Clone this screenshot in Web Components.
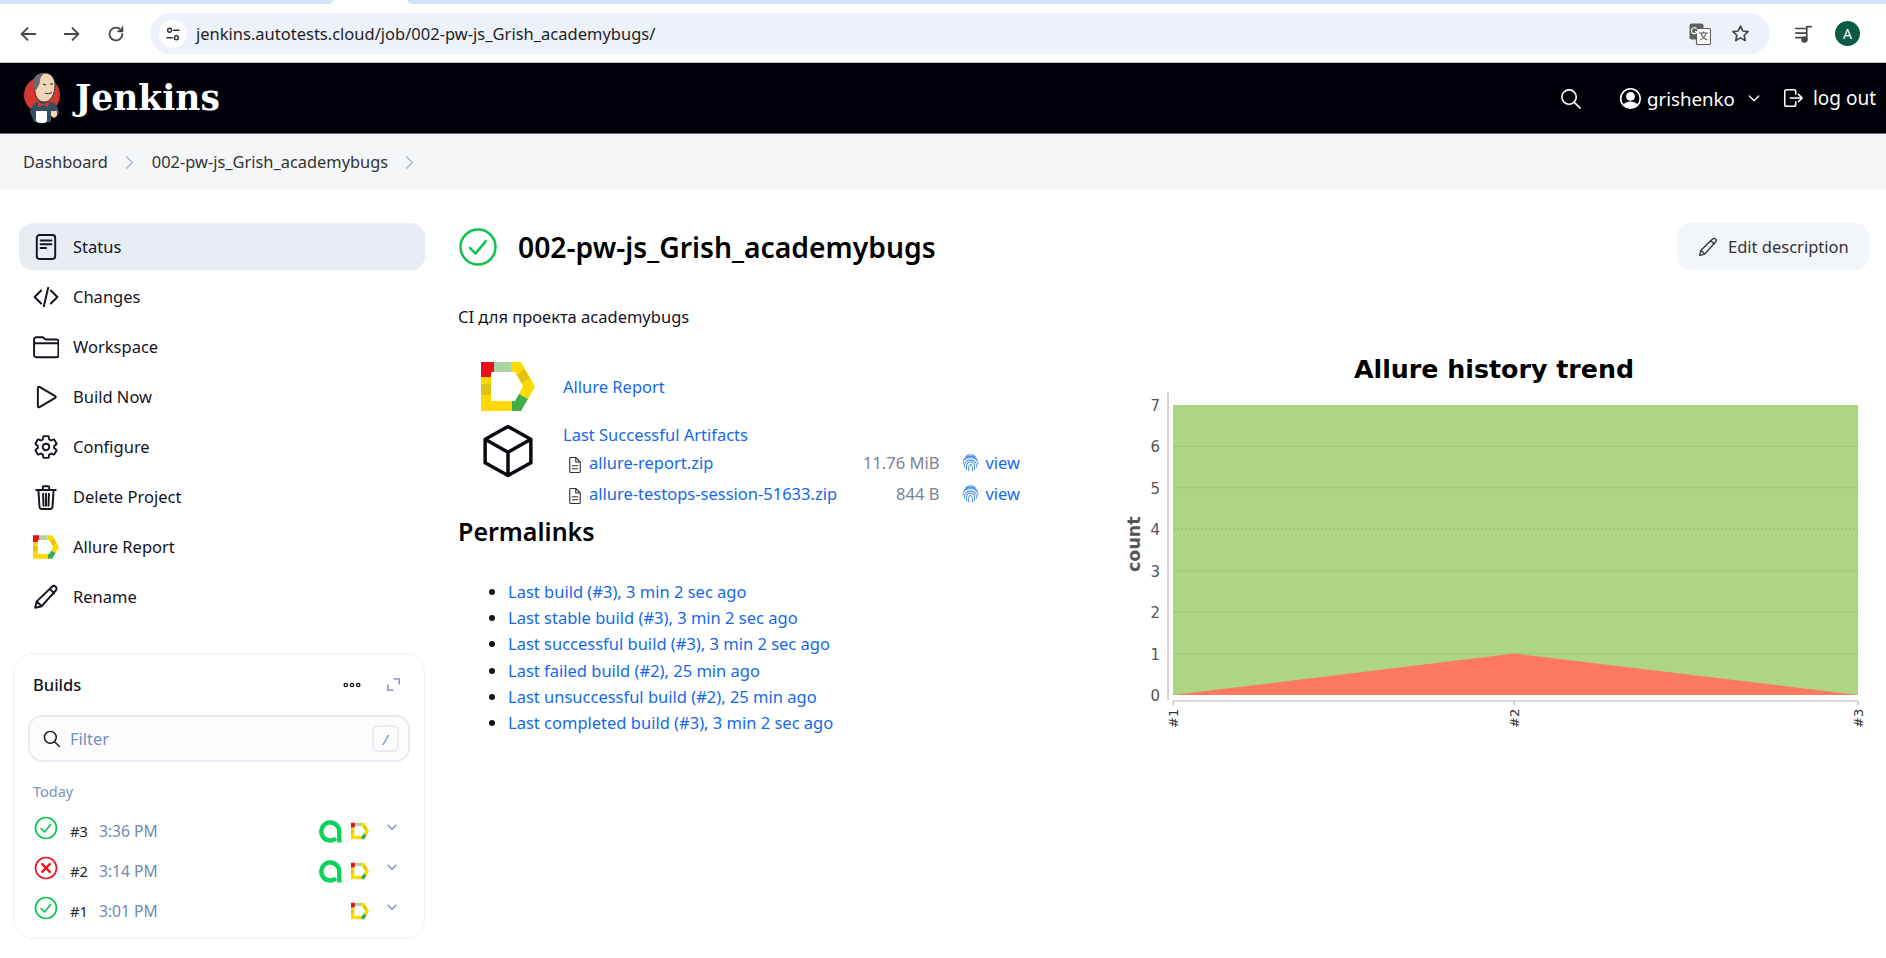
<!DOCTYPE html>
<html lang="en">
<head>
<meta charset="utf-8">
<title>002-pw-js_Grish_academybugs - Jenkins</title>
<style>
  html, body { margin: 0; background: #fff; }
  body { font-family: "Noto Sans", "Open Sans", sans-serif; font-size: 16.5px; color: #14141f; overflow: hidden; height: 958px; }
  .page { display: flex; align-items: flex-start; }
</style>
</head>
<body>
<browser-bar url="jenkins.autotests.cloud/job/002-pw-js_Grish_academybugs/"></browser-bar>
<jenkins-header user="grishenko"></jenkins-header>
<bread-crumbs>
  <bread-crumb>Dashboard</bread-crumb>
  <bread-crumb>002-pw-js_Grish_academybugs</bread-crumb>
</bread-crumbs>
<div class="page">
  <side-bar>
    <nav-item icon="status" active>Status</nav-item>
    <nav-item icon="code">Changes</nav-item>
    <nav-item icon="folder">Workspace</nav-item>
    <nav-item icon="play">Build Now</nav-item>
    <nav-item icon="gear">Configure</nav-item>
    <nav-item icon="trash">Delete Project</nav-item>
    <nav-item icon="allure">Allure Report</nav-item>
    <nav-item icon="pencil">Rename</nav-item>
    <builds-card slot="card">
      <build-row num="#3" time="3:36 PM" status="ok" testops></build-row>
      <build-row num="#2" time="3:14 PM" status="fail" testops></build-row>
      <build-row num="#1" time="3:01 PM" status="ok"></build-row>
    </builds-card>
  </side-bar>
  <job-page name="002-pw-js_Grish_academybugs" description="CI для проекта academybugs">
    <job-links>
      <artifact-row name="allure-report.zip" size="11.76 MiB"></artifact-row>
      <artifact-row name="allure-testops-session-51633.zip" size="844 B"></artifact-row>
    </job-links>
    <perma-links>
      <li>Last build (#3), 3 min 2 sec ago</li>
      <li>Last stable build (#3), 3 min 2 sec ago</li>
      <li>Last successful build (#3), 3 min 2 sec ago</li>
      <li>Last failed build (#2), 25 min ago</li>
      <li>Last unsuccessful build (#2), 25 min ago</li>
      <li>Last completed build (#3), 3 min 2 sec ago</li>
    </perma-links>
    <trend-chart slot="chart"></trend-chart>
  </job-page>
</div>

<script>
const ALLURE_LOGO = `
  <polygon fill="#e8101a" points="0,0 13,0 13,10 10,10 10,15 0,15"/>
  <polygon fill="#a9d3a4" points="13,0 30,0 30,10 13,10"/>
  <polygon fill="#ffd900" points="30,0 40,0 54,24.5 47,37 38,32 42,24.5 34,10 30,10"/>
  <polygon fill="#e3c312" points="36,13 43,7 49,16 41,21"/>
  <polygon fill="#ffd900" points="0,15 10,15 10,22 0,22"/>
  <polygon fill="#e3c312" points="0,22 10,22 10,33 0,33"/>
  <polygon fill="#ffd900" points="0,33 10,33 10,39 31,39 31,49 0,49"/>
  <polygon fill="#3fae49" points="31,39 34,39 38,32 47,37 40,49 31,49"/>`;

// stroke icons, all on a 24 box
const ICONS = {
  back: `<path d="M20 12H5M11.5 5.5 5 12l6.5 6.5"/>`,
  forward: `<path d="M4 12h15M12.5 5.5 19 12l-6.5 6.5"/>`,
  reload: `<path d="M19 12a7 7 0 1 1-2.2-5.1L19 9M19 4.5V9h-4.5"/>`,
  tune: `<circle cx="7.5" cy="7" r="2.6"/><path d="M13 7h7M4 17h7"/><circle cx="16.5" cy="17" r="2.6"/>`,
  star: `<path d="M12 3.5l2.6 5.6 6.1.7-4.5 4.2 1.2 6L12 17l-5.4 3 1.2-6-4.5-4.2 6.1-.7z"/>`,
  search: `<circle cx="10.5" cy="10.5" r="7.5"/><path d="M16 16l6 6"/>`,
  user: `<circle cx="12" cy="12" r="10.2"/><circle cx="12" cy="9.8" r="3.8" fill="currentColor"/><path fill="currentColor" stroke="none" d="M4.8 18.6c1.6-2.6 4.2-3.6 7.2-3.6s5.6 1 7.2 3.6A10 10 0 0 1 12 22a10 10 0 0 1-7.2-3.4z"/>`,
  chevron: `<path d="M5 9l7 7 7-7"/>`,
  crumb: `<path d="M8 4l8 8-8 8"/>`,
  logout: `<path d="M15 8V5a2 2 0 0 0-2-2H5a2 2 0 0 0-2 2v14a2 2 0 0 0 2 2h8a2 2 0 0 0 2-2v-3M9 12h13M18 8l4 4-4 4"/>`,
  status: `<rect x="3.5" y="1" width="17" height="22" rx="2.4"/><path d="M7 6h10M7 9.500h10M7 13h5"/>`,
  code: `<path d="M7.500 6 1.500 12l6 6M16.500 6l6 6-6 6M14 3.500 10 20.500"/>`,
  folder: `<path d="M1 18.500V5a2 2 0 0 1 2-2h5.500c1.600 0 1.900 2 3.500 2h9.500a2 2 0 0 1 2 2v12.500a2 2 0 0 1-2 2H3a2 2 0 0 1-2-2zM1 8.500h22"/>`,
  play: `<path d="M4.500 3.500v17c0 .8.800 1.200 1.500.8l14.500-8.500c.6-.4.6-1.200 0-1.600L6 2.700c-.7-.4-1.500 0-1.500.8z"/>`,
  gear: `<g transform="scale(.0469)" stroke-width="38"><path d="M262.290 192.310a64 64 0 1057.400 57.400 64.130 64.130 0 00-57.400-57.400zM416.390 256a154.340 154.340 0 01-1.530 20.790l45.210 35.460a10.810 10.810 0 012.450 13.750l-42.770 74a10.810 10.810 0 01-13.140 4.590l-44.900-18.080a16.110 16.110 0 00-15.170 1.750A164.480 164.480 0 01325 400.800a15.940 15.940 0 00-8.820 12.140l-6.730 47.890a11.080 11.080 0 01-10.680 9.170h-85.540a11.110 11.110 0 01-10.690-8.870l-6.720-47.820a16.070 16.070 0 00-9-12.220 155.300 155.300 0 01-21.460-12.570 16 16 0 00-15.110-1.710l-44.890 18.070a10.810 10.810 0 01-13.140-4.580l-42.770-74a10.800 10.800 0 012.450-13.750l38.210-30a16.050 16.050 0 006-14.080c-.36-4.170-.58-8.330-.58-12.500s.21-8.270.58-12.350a16 16 0 00-6.070-13.940l-38.190-30A10.810 10.810 0 0149.48 186l42.770-74a10.810 10.810 0 0113.140-4.590l44.900 18.080a16.110 16.110 0 0015.17-1.750A164.480 164.480 0 01187 111.200a15.940 15.940 0 008.820-12.140l6.730-47.890A11.080 11.080 0 01213.23 42h85.540a11.110 11.110 0 0110.69 8.870l6.720 47.820a16.070 16.070 0 009 12.220 155.300 155.300 0 0121.460 12.570 16 16 0 0015.11 1.710l44.890-18.070a10.810 10.810 0 0113.140 4.580l42.770 74a10.800 10.800 0 01-2.450 13.750l-38.210 30a16.050 16.050 0 00-6.050 14.080c.33 4.140.55 8.300.55 12.470z"/></g>`,
  trash: `<path d="M5 5.500l1 15.500c.1 1 .8 2 2 2h8c1.200 0 1.900-1 2-2l1-15.500M3 5.500h18M9 5.500V3c0-.6.400-1 1-1h4c.6 0 1 .4 1 1v2.500M9.300 9l.4 11M12 9v11M14.700 9l-.4 11"/>`,
  pencil: `<path d="M2 22l1.500-6L17.500 2.500c1-1 2.500-1 3.500 0s1 2.500 0 3.500L8 20.500zM3.500 16 8 20.500M15.500 4.500 19.500 8.500"/>`,
  dots: `<circle cx="4.500" cy="12" r="2"/><circle cx="12" cy="12" r="2"/><circle cx="19.500" cy="12" r="2"/>`,
  expand: `<path d="M13 3h8v8M11 21H3v-8"/>`,
  check: `<circle cx="12" cy="12" r="10.500"/><path d="M7.200 12.500l3.300 3.500 6.200-7.500"/>`,
  cross: `<circle cx="12" cy="12" r="10.500"/><path d="M8.200 8.200l7.600 7.600M15.800 8.200l-7.600 7.600" stroke-width="2.400"/>`,
  cube: `<path d="M12 1.500 2.200 7v10L12 22.500 21.800 17V7zM2.200 7 12 12.500 21.800 7M12 12.500v10"/>`,
  file: `<path d="M6 2h7l6 6v12.500c0 .8-.7 1.500-1.500 1.500h-11c-.8 0-1.500-.7-1.500-1.500v-17C5 2.700 5.200 2 6 2zM13 2v6h6M8.500 13h7M8.500 17h7"/>`,
  print: `<path d="M6 4.500A9.500 9.500 0 0 1 18 4.500M3.500 9a10 10 0 0 1 17 0M2.500 14c0-5 4-8 9.500-8s9.500 3 9.500 8M4.500 18c-.7-5 1.500-9 7.500-9s8 4 7.500 9M7 21c-.5-4-.5-9.500 5-9.500s5.500 5.500 5 9.500M9.800 22.500c-.6-3-.3-8 2.200-8s2.800 5 2.200 8"/>`,
  music: `<path d="M3 6h11M3 11h11M3 16h7M15 4.500v13"/><circle cx="12.500" cy="18" r="2.600" fill="currentColor"/><path d="M15 4h5"/>`
};

function iconSvg(name, size, sw) {
  if (name === 'allure') {
    return `<svg viewBox="0 0 54 49" width="${size}" height="${size}" style="display:block">${ALLURE_LOGO}</svg>`;
  }
  return `<svg viewBox="0 0 24 24" width="${size}" height="${size}" fill="none" stroke="currentColor" stroke-width="${sw}" stroke-linecap="round" stroke-linejoin="round" style="display:block">${ICONS[name]}</svg>`;
}

class AppIcon extends HTMLElement {
  connectedCallback() {
    const size = this.getAttribute('size') || 24;
    const sw = this.getAttribute('sw') || 2;
    const color = this.getAttribute('color') || 'inherit';
    this.attachShadow({ mode: 'open' });
    this.shadowRoot.innerHTML = `
      <style>:host { display: block; flex: none; width: ${size}px; height: ${size}px; color: ${color}; }</style>
      ${iconSvg(this.getAttribute('name'), size, sw)}`;
  }
}

class BrowserBar extends HTMLElement {
  connectedCallback() {
    this.attachShadow({ mode: 'open' });
    this.shadowRoot.innerHTML = `
      <style>
        :host { display: block; height: 63px; background: #fff; box-sizing: border-box; border-bottom: 1px solid #c9c9c9; }
        .strip { display: flex; height: 4px; }
        .strip i { background: #d3e3fd; display: block; }
        .strip .l { width: 333px; border-bottom-right-radius: 6px; }
        .strip .r { flex: 1; margin-left: 75px; border-bottom-left-radius: 6px; }
        .tools { display: flex; align-items: center; height: 41px; margin-top: 9px; color: #474747; }
        .nav { margin-left: 17px; margin-right: 22px; }
        .nav + .nav { margin-left: 0; }
        .pill { width: 1620px; height: 41px; background: #edf2fa; border-radius: 21px; display: flex; align-items: center; box-sizing: border-box; padding-left: 9px; }
        .site { width: 28px; height: 28px; border-radius: 50%; background: #fff; display: flex; align-items: center; justify-content: center; color: #333; }
        .url { margin-left: 9px; font-size: 16.5px; color: #1f1f1f; flex: 1; }
        .translate { width: 22px; height: 22px; margin-right: 19px; }
        .star { margin-right: 19px; }
        .music { margin-left: 23px; }
        .avatar { margin-left: 20px; width: 25px; height: 25px; border-radius: 50%; background: #0b5a47; color: #fff; font-size: 14px; display: flex; align-items: center; justify-content: center; }
      </style>
      <div class="strip"><i class="l"></i><i class="r"></i></div>
      <div class="tools">
        <app-icon class="nav" name="back" size="22" sw="2"></app-icon>
        <app-icon class="nav" name="forward" size="22" sw="2"></app-icon>
        <app-icon class="nav" name="reload" size="22" sw="2" style="margin-right:23px"></app-icon>
        <div class="pill">
          <span class="site"><app-icon name="tune" size="18" sw="2"></app-icon></span>
          <span class="url">${this.getAttribute('url')}</span>
          <svg class="translate" viewBox="0 0 22 22" width="22" height="22">
            <rect x="0.500" y="0.500" width="14" height="16" rx="2" fill="#5f5f5f"/>
            <rect x="7.500" y="5.500" width="14" height="16" rx="1.500" fill="#fff" stroke="#5f5f5f" stroke-width="1.200"/>
            <path d="M10 10h9M14.500 8.500V10M12 10c1 3.500 3.500 6 6.500 7M17 10c-.8 3.500-3 6-6 7" fill="none" stroke="#5f5f5f" stroke-width="1.100"/>
            <path d="M7.500 5.500a3 3 0 1 0 .8 3.200H6" fill="none" stroke="#fff" stroke-width="1.200"/>
          </svg>
          <app-icon class="star" name="star" size="21" sw="1.900"></app-icon>
        </div>
        <app-icon class="music" name="music" size="22" sw="1.800"></app-icon>
        <span class="avatar">A</span>
      </div>`;
  }
}

class JenkinsHeader extends HTMLElement {
  connectedCallback() {
    this.attachShadow({ mode: 'open' });
    this.shadowRoot.innerHTML = `
      <style>
        :host { display: block; height: 71px; box-sizing: border-box; background: #000009; border-bottom: 1px solid #6b6b70; color: #fff; }
        .row { display: flex; align-items: center; height: 70px; padding: 0 10px 0 24px; }
        .brand { font-family: "DejaVu Serif", "Liberation Serif", serif; font-weight: 700; font-size: 34.500px; margin-left: 15px; }
        .right { margin-left: auto; display: flex; align-items: center; font-size: 19px; }
        .name { margin-left: 5px; font-size: 18.700px; }
        .who { margin-left: 37px; }
        .chev { margin-left: 11px; }
        .out { margin-left: 20px; }
        .bye { margin-left: 9px; }
        svg { display: block; flex: none; }
      </style>
      <div class="row">
        <svg width="36" height="52" viewBox="0 0 36 52">
          <circle cx="18" cy="23" r="18" fill="#d33833"/>
          <path d="M6 40c1-7 6-11 11-11l11 1c4 2 7 6 7 12l-4 3-4-3v8H10z" fill="#335061"/>
          <path d="M11 10C11 4 16 1 21 1c6 0 10 5 10 12 0 9-4 17-11 17-5 0-9-5-9-11z" fill="#f0d6b7" stroke="#231f20" stroke-width=".8"/>
          <path d="M12 18C8 14 8 6 13 3c3-2 6-2 8-2-3 2-5 4-5 8 0 3-2 6-4 9z" fill="#6d6b6d"/>
          <path d="M21 21c2 1 5 1 7-1" fill="none" stroke="#231f20" stroke-width="1"/>
          <path d="M19 12l3 1M26 12l3 0" stroke="#231f20" stroke-width="1.200"/>
          <path d="M14 30l5 2 6-2-1 5-5-2-5 2z" fill="#d33833"/>
          <path d="M12 39h11v10c-1 3-9 3-11 0z" fill="#fff"/>
          <path d="M27 39h6v5l-3 2-3-2z" fill="#f0d6b7"/>
        </svg>
        <span class="brand">Jenkins</span>
        <div class="right">
          <app-icon name="search" size="23" sw="1.700"></app-icon>
          <app-icon class="who" name="user" size="23" sw="1.700"></app-icon>
          <span class="name">${this.getAttribute('user')}</span>
          <app-icon class="chev" name="chevron" size="16" sw="2"></app-icon>
          <app-icon class="out" name="logout" size="22" sw="1.700"></app-icon>
          <span class="bye">log out</span>
        </div>
      </div>`;
  }
}

class BreadCrumbs extends HTMLElement {
  connectedCallback() {
    this.attachShadow({ mode: 'open' });
    this.shadowRoot.innerHTML = `
      <style>
        :host { display: flex; align-items: center; height: 56px; box-sizing: border-box; padding: 0 0 2px 23px; background: #f5f6f8; color: #333; font-size: 16.400px; }
      </style>
      <slot></slot>`;
  }
}

class BreadCrumb extends HTMLElement {
  connectedCallback() {
    this.attachShadow({ mode: 'open' });
    this.shadowRoot.innerHTML = `
      <style>
        :host { display: flex; align-items: center; }
        app-icon { color: #a4b8d4; margin: 2px 14px 0 13px; }
      </style>
      <slot></slot>
      <app-icon name="crumb" size="17" sw="1.900"></app-icon>`;
  }
}

class SideBar extends HTMLElement {
  connectedCallback() {
    this.attachShadow({ mode: 'open' });
    this.shadowRoot.innerHTML = `
      <style>
        :host { display: block; flex: none; width: 425px; box-sizing: border-box; padding: 33px 0 0 0; }
        .nav { display: flex; flex-direction: column; gap: 3px; margin-left: 19px; }
        .card { display: block; margin: 33px 0 0 13px; }
      </style>
      <div class="nav"><slot></slot></div>
      <div class="card"><slot name="card"></slot></div>`;
  }
}

class NavItem extends HTMLElement {
  connectedCallback() {
    this.attachShadow({ mode: 'open' });
    const name = this.getAttribute('icon');
    this.shadowRoot.innerHTML = `
      <style>
        :host { display: flex; align-items: center; gap: 14px; height: 47px; padding-left: 14px; border-radius: 14px; color: #14141f; }
        :host([active]) { background: #e8ecf3; }
        .t { position: relative; top: -0.500px; }
      </style>
      <app-icon name="${name}" size="26" sw="${name === 'gear' ? 2 : 1.800}"></app-icon>
      <span class="t"><slot></slot></span>`;
  }
}

class BuildsCard extends HTMLElement {
  connectedCallback() {
    this.attachShadow({ mode: 'open' });
    this.shadowRoot.innerHTML = `
      <style>
        :host { display: block; box-sizing: border-box; width: 412px; height: 286px; border: 1.500px solid #eef0f5; border-radius: 20px; padding: 0 14px; }
        .head { display: flex; align-items: center; height: 61px; padding-left: 5px; }
        .head b { font-weight: 500; font-size: 16.500px; flex: 1; }
        .head .dots { margin-right: 24px; color: #14141f; }
        .head .exp { margin-right: 9px; color: #6d87b3; }
        .filter { display: flex; align-items: center; height: 47px; box-sizing: border-box; border: 2px solid #e7ebf3; border-radius: 14px; background: #fcfcfd; padding: 0 9px 0 12px; color: #7090c4; }
        .filter span { flex: 1; margin-left: 9px; }
        .key { width: 27px; height: 27px; box-sizing: border-box; border: 2px solid #e7ebf3; border-radius: 6px; display: flex; align-items: center; justify-content: center; font-size: 15px; }
        .today { margin: 19px 0 0 5px; font-size: 14.500px; color: #7b93bd; line-height: 20px; height: 20px; }
        .rows { margin-top: 10px; }
      </style>
      <div class="head">
        <b>Builds</b>
        <app-icon class="dots" name="dots" size="20" sw="1.600"></app-icon>
        <app-icon class="exp" name="expand" size="15" sw="2.200"></app-icon>
      </div>
      <div class="filter">
        <app-icon name="search" size="19" sw="1.800" color="#14141f"></app-icon>
        <span>Filter</span>
        <i class="key">/</i>
      </div>
      <div class="today">Today</div>
      <div class="rows"><slot></slot></div>`;
  }
}

class BuildRow extends HTMLElement {
  connectedCallback() {
    this.attachShadow({ mode: 'open' });
    const ok = this.getAttribute('status') === 'ok';
    const testops = this.hasAttribute('testops') ? `
      <svg class="ops" width="23" height="23" viewBox="0 0 21 21">
        <path d="M18.500 20.500V10.500a8.200 8.200 0 1 0-3 6.300" fill="none" stroke="#0ad35b" stroke-width="4"/>
      </svg>` : '';
    this.shadowRoot.innerHTML = `
      <style>
        :host { display: flex; align-items: center; height: 40px; font-size: 15.600px; position: relative; }
        .st { margin-left: 6px; position: relative; top: -3px; }
        .num { margin-left: 12px; width: 29px; color: #222; font-size: 14.700px; }
        .time { color: #6f88b4; }
        .end { margin-left: auto; display: flex; align-items: center; }
        .ops { display: block; margin-right: 9px; }
        .chev { margin: 0 11px 0 16px; position: relative; top: -4px; color: #6d87b3; }
      </style>
      <app-icon class="st" name="${ok ? 'check' : 'cross'}" size="24" sw="1.700" color="${ok ? '#12c24f' : '#f0141e'}"></app-icon>
      <span class="num">${this.getAttribute('num')}</span>
      <span class="time">${this.getAttribute('time')}</span>
      <span class="end">${testops}<app-icon name="allure" size="18"></app-icon><app-icon class="chev" name="chevron" size="14" sw="2.200"></app-icon></span>`;
  }
}

class JobPage extends HTMLElement {
  connectedCallback() {
    this.attachShadow({ mode: 'open' });
    this.shadowRoot.innerHTML = `
      <style>
        :host { display: block; flex: 1; min-width: 0; padding: 33px 17px 0 33px; }
        .title { display: flex; align-items: center; height: 47px; }
        h1 { margin: 0 0 0 20px; font-size: 28.300px; font-weight: 600; color: #000; flex: 1; }
        .edit { display: flex; align-items: center; gap: 10px; width: 192px; height: 47px; box-sizing: border-box; padding-left: 21px; background: #f2f5f9; border-radius: 14px; color: #333; }
        .body { display: flex; align-items: flex-start; }
        .left { width: 642px; flex: none; }
        .desc { margin-top: 35px; line-height: 24px; height: 24px; }
        .chart { margin-top: 80px; }
      </style>
      <div class="title">
        <app-icon name="check" size="40" sw="1.500" color="#12c24f"></app-icon>
        <h1>${this.getAttribute('name')}</h1>
        <div class="edit"><app-icon name="pencil" size="20" sw="1.600"></app-icon><span>Edit description</span></div>
      </div>
      <div class="body">
        <div class="left">
          <div class="desc">${this.getAttribute('description')}</div>
          <slot></slot>
        </div>
        <div class="chart"><slot name="chart"></slot></div>
      </div>`;
  }
}

class JobLinks extends HTMLElement {
  connectedCallback() {
    this.attachShadow({ mode: 'open' });
    this.shadowRoot.innerHTML = `
      <style>
        :host { display: block; margin-top: 33px; }
        .row { display: flex; }
        .ico { width: 105px; flex: none; display: flex; justify-content: center; padding-right: 6px; box-sizing: border-box; }
        .link { color: #1469eb; }
        .allure { height: 49px; align-items: center; }
        .arts { margin-top: 12px; }
        .cube { color: #0a0a14; }
        .list { flex: none; width: 457px; }
        .arts .link { display: block; line-height: 24px; }
      </style>
      <div class="row allure">
        <div class="ico"><svg width="54" height="49" viewBox="0 0 54 49">${ALLURE_LOGO}</svg></div>
        <span class="link">Allure Report</span>
      </div>
      <div class="row arts">
        <div class="ico"><app-icon class="cube" name="cube" size="56" sw="1.500"></app-icon></div>
        <div class="list">
          <span class="link">Last Successful Artifacts</span>
          <div class="files"><slot></slot></div>
        </div>
      </div>`;
  }
}

class ArtifactRow extends HTMLElement {
  connectedCallback() {
    this.attachShadow({ mode: 'open' });
    this.shadowRoot.innerHTML = `
      <style>
        :host { display: flex; align-items: center; height: 31px; }
        .f { margin: 4px 5px 0 3px; color: #333; }
        .n { color: #1469eb; flex: 1; }
        .s { color: #7b8494; margin-right: 22px; }
        .v { color: #1469eb; margin-left: 5px; }
      </style>
      <app-icon class="f" name="file" size="18" sw="1.500"></app-icon>
      <span class="n">${this.getAttribute('name')}</span>
      <span class="s">${this.getAttribute('size')}</span>
      <app-icon name="print" size="19" sw="1.300" color="#4a90ea"></app-icon>
      <span class="v">view</span>`;
  }
}

class PermaLinks extends HTMLElement {
  connectedCallback() {
    this.attachShadow({ mode: 'open' });
    this.shadowRoot.innerHTML = `
      <style>
        :host { display: block; }
        h2 { margin: 3px 0 0; font-size: 25px; font-weight: 600; line-height: 38px; color: #000; }
        ul { margin: 29px 0 0; padding-left: 50px; line-height: 26.200px; color: #1469eb; }
        ::slotted(li)::marker { color: #14141f; }
      </style>
      <h2>Permalinks</h2>
      <ul><slot></slot></ul>`;
  }
}

class TrendChart extends HTMLElement {
  connectedCallback() {
    this.attachShadow({ mode: 'open' });
    // plot box: x 73..758, y 55..345 (origin 1100,350)
    const top = 55, bottom = 345, left = 73, right = 758, mid = 414, step = (bottom - top) / 7;
    let grid = '', ticks = '';
    for (let n = 0; n <= 7; n++) {
      const y = bottom - n * step;
      if (n > 0 && n < 7) grid += `<line x1="${left}" x2="${right}" y1="${y}" y2="${y}" stroke="#93b96c" stroke-dasharray="2 2"/>`;
      ticks += `<text x="60" y="${y + 6}" text-anchor="end" font-size="15" fill="#555">${n}</text>`;
    }
    const xs = [[left, '#1'], [mid, '#2'], [right, '#3']];
    const xTicks = xs.map(([x, t]) => `
      <line x1="${x}" x2="${x}" y1="351" y2="355" stroke="#aaa"/>
      <text transform="translate(${x + 5},378) rotate(-90)" font-size="13" fill="#333">${t}</text>`).join('');
    this.shadowRoot.innerHTML = `
      <style>
        :host { display: block; width: 770px; height: 380px; }
        svg { display: block; font-family: "DejaVu Sans", sans-serif; }
      </style>
      <svg width="770" height="380" viewBox="0 0 770 380">
        <text x="394" y="28" text-anchor="middle" font-size="25.300" font-weight="700" fill="#000">Allure history trend</text>
        <rect x="${left}" y="${top}" width="${right - left}" height="${bottom - top}" fill="#aed581"/>
        ${grid}
        <polygon points="${left},${bottom} ${mid},${bottom - step} ${right},${bottom}" fill="#ff7961"/>
        <line x1="68" x2="68" y1="42" y2="350" stroke="#c4c4c4" stroke-width="1.500"/>
        <line x1="${left}" x2="${right}" y1="351" y2="351" stroke="#cfcfcf" stroke-width="1.500"/>
        ${ticks}${xTicks}
        <text transform="translate(40,222) rotate(-90)" font-size="17.500" font-weight="700" fill="#555">count</text>
      </svg>`;
  }
}

customElements.define('app-icon', AppIcon);
customElements.define('browser-bar', BrowserBar);
customElements.define('jenkins-header', JenkinsHeader);
customElements.define('bread-crumbs', BreadCrumbs);
customElements.define('bread-crumb', BreadCrumb);
customElements.define('side-bar', SideBar);
customElements.define('nav-item', NavItem);
customElements.define('builds-card', BuildsCard);
customElements.define('build-row', BuildRow);
customElements.define('job-page', JobPage);
customElements.define('job-links', JobLinks);
customElements.define('artifact-row', ArtifactRow);
customElements.define('perma-links', PermaLinks);
customElements.define('trend-chart', TrendChart);
</script>
</body>
</html>
